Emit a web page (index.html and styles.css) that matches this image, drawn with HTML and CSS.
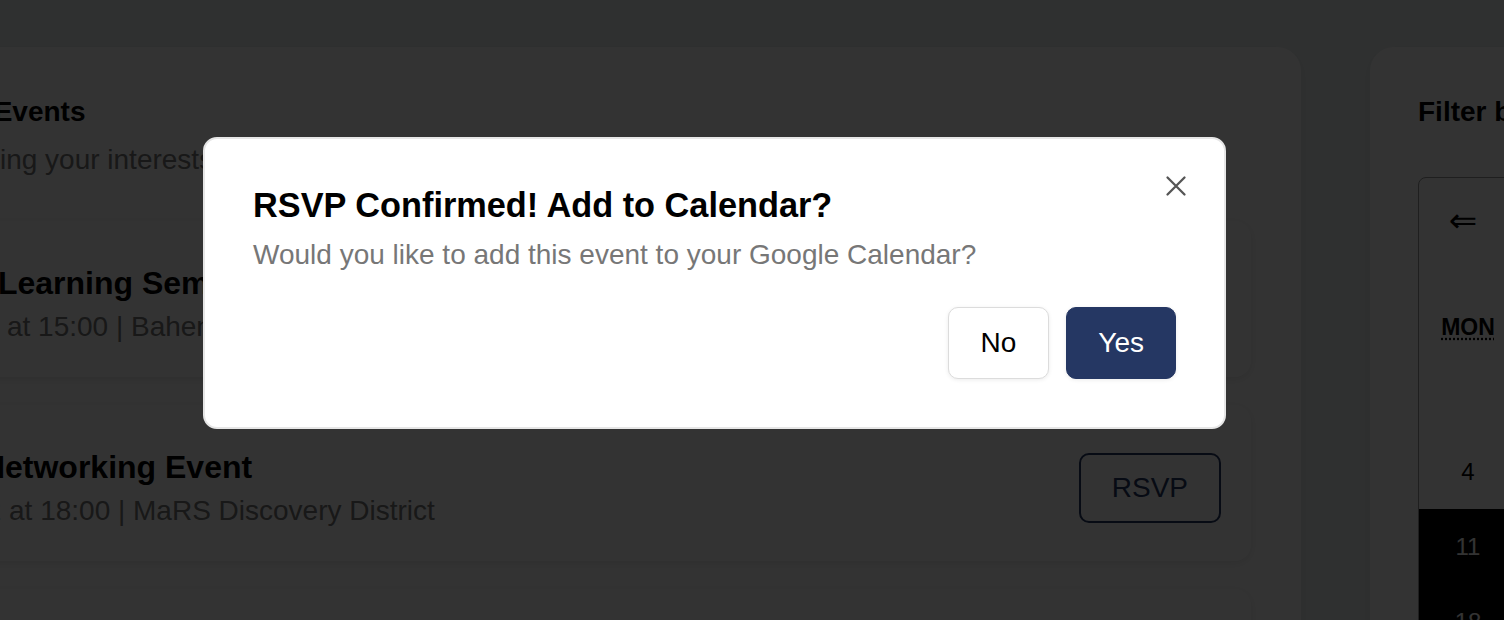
FILE: index.html
```html
<!DOCTYPE html>
<html lang="en">
<head>
<meta charset="utf-8">
<title>Events</title>
<link rel="stylesheet" href="styles.css">
</head>
<body>
<div class="page">
  <main class="events-card">
    <h2 class="section-title">Upcoming Events</h2>
    <p class="section-sub">Picks matching your interests</p>
    <ul class="event-list">
      <li class="event">
        <div class="event-info">
          <h3 class="event-title">Machine Learning Seminar</h3>
          <p class="event-meta">2025-08-11 at 15:00 | Bahen Centre</p>
        </div>
        <button class="btn-rsvp">RSVP</button>
      </li>
      <li class="event">
        <div class="event-info">
          <h3 class="event-title">Startup Networking Event</h3>
          <p class="event-meta">2025-08-12 at 18:00 | MaRS Discovery District</p>
        </div>
        <button class="btn-rsvp">RSVP</button>
      </li>
      <li class="event">
        <div class="event-info">
          <h3 class="event-title">Campus Hackathon Kickoff</h3>
          <p class="event-meta">2025-08-18 at 10:00 | Myhal Centre</p>
        </div>
        <button class="btn-rsvp">RSVP</button>
      </li>
    </ul>
  </main>
  <aside class="filter-card">
    <h2 class="section-title">Filter by Date</h2>
    <div class="calendar">
      <div class="cal-nav">
        <button class="cal-arrow">&#8656;</button>
        <button class="cal-arrow">&#8592;</button>
        <span class="cal-label">August 2025</span>
        <button class="cal-arrow">&#8594;</button>
        <button class="cal-arrow">&#8658;</button>
      </div>
      <div class="cal-weekdays">
        <abbr title="Monday">MON</abbr><abbr title="Tuesday">TUE</abbr><abbr title="Wednesday">WED</abbr><abbr title="Thursday">THU</abbr><abbr title="Friday">FRI</abbr><abbr title="Saturday">SAT</abbr><abbr title="Sunday">SUN</abbr>
      </div>
      <div class="cal-days">
        <span class="tile"></span><span class="tile"></span><span class="tile"></span><span class="tile"></span><span class="tile">1</span><span class="tile">2</span><span class="tile">3</span>
        <span class="tile">4</span><span class="tile">5</span><span class="tile">6</span><span class="tile">7</span><span class="tile">8</span><span class="tile">9</span><span class="tile">10</span>
        <span class="tile active">11</span><span class="tile active">12</span><span class="tile active">13</span><span class="tile active">14</span><span class="tile active">15</span><span class="tile active">16</span><span class="tile active">17</span>
        <span class="tile active">18</span><span class="tile">19</span><span class="tile">20</span><span class="tile">21</span><span class="tile">22</span><span class="tile">23</span><span class="tile">24</span>
      </div>
    </div>
  </aside>
</div>

<div class="overlay">
  <div class="modal" role="dialog" aria-modal="true">
    <button class="modal-close" aria-label="Close">
      <svg width="24" height="24" viewBox="0 0 24 24"><path d="M3.5 3.5 L20.5 20.5 M20.5 3.5 L3.5 20.5" stroke="#555" stroke-width="2.3" stroke-linecap="round" fill="none"/></svg>
    </button>
    <h2 class="modal-title">RSVP Confirmed! Add to Calendar?</h2>
    <p class="modal-text">Would you like to add this event to your Google Calendar?</p>
    <div class="modal-actions">
      <button class="btn btn-no">No</button>
      <button class="btn btn-yes">Yes</button>
    </div>
  </div>
</div>
</body>
</html>
```

FILE: styles.css
```css
html, body {
  margin: 0;
  padding: 0;
}
body {
  width: 1504px;
  height: 620px;
  overflow: hidden;
  background: #ebf0f0;
  font-family: "Liberation Sans", Arial, sans-serif;
  color: #000;
}

.page {
  display: flex;
  align-items: flex-start;
  gap: 69px;
  padding-top: 47px;
  margin-left: -199px;
  width: max-content;
}

.events-card {
  width: 1500px;
  box-sizing: border-box;
  background: #fff;
  border-radius: 24px;
  padding: 48px 50px 48px 48px;
  box-shadow: 0 4px 16px rgba(0, 0, 0, 0.06);
  flex-shrink: 0;
}

.section-title {
  margin: 0;
  font-size: 28px;
  line-height: 1.2;
  font-weight: 700;
  color: #000;
  white-space: nowrap;
}
.section-sub {
  margin: 14px 0 0;
  font-size: 28px;
  line-height: 1.2;
  color: #777;
  white-space: nowrap;
}

.event-list {
  list-style: none;
  margin: 45px 0 0;
  padding: 0;
  display: flex;
  flex-direction: column;
  gap: 28px;
}
.event {
  display: flex;
  align-items: center;
  justify-content: space-between;
  background: #fff;
  border-radius: 16px;
  box-shadow: 0 2px 10px rgba(0, 0, 0, 0.1);
  padding: 43px 30px 34px 12px;
}
.event-title {
  margin: 0;
  font-size: 32px;
  line-height: 1.2;
  font-weight: 700;
  white-space: nowrap;
}
.event-meta {
  margin: 7px 0 0;
  text-indent: -3px;
  font-size: 28px;
  line-height: 1.2;
  color: #777;
  white-space: nowrap;
}
.btn-rsvp {
  font-family: inherit;
  font-size: 28px;
  line-height: 1.15;
  color: #253763;
  background: #fff;
  border: 2px solid #253763;
  border-radius: 10px;
  padding: 17px 31px;
}

.filter-card {
  width: 784px;
  box-sizing: border-box;
  background: #fff;
  border-radius: 24px;
  padding: 48px;
  box-shadow: 0 4px 16px rgba(0, 0, 0, 0.06);
  flex-shrink: 0;
}
.calendar {
  margin-top: 48px;
  width: 686px;
  border: 1px solid #999;
  border-radius: 8px;
  overflow: hidden;
}
.cal-nav {
  display: flex;
  height: 84px;
}
.cal-arrow {
  width: 88px;
  border: 0;
  background: none;
  padding: 0;
  font-family: "DejaVu Sans", sans-serif;
  font-size: 34px;
  color: #000;
}
.cal-label {
  flex: 1;
  display: flex;
  align-items: center;
  justify-content: center;
  font-size: 24px;
}
.cal-weekdays {
  margin-top: 36px;
  height: 60px;
  display: grid;
  grid-template-columns: repeat(7, 98px);
  align-items: center;
  text-align: center;
}
.cal-weekdays abbr {
  font-size: 23px;
  font-weight: 700;
  text-decoration: underline dotted;
  text-underline-offset: 3px;
}
.cal-days {
  margin-top: 1.5px;
  display: grid;
  grid-template-columns: repeat(7, 98px);
  grid-auto-rows: 75px;
}
.tile {
  display: flex;
  align-items: center;
  justify-content: center;
  font-size: 24px;
  color: #000;
}
.tile.active {
  background: #000;
  color: #fff;
}

.overlay {
  position: fixed;
  inset: 0;
  background: rgba(0, 0, 0, 0.8);
}
.modal {
  position: relative;
  box-sizing: border-box;
  width: 1023px;
  margin: 137px 0 0 203px;
  background: #fff;
  border: 2px solid #e6e6e6;
  border-radius: 14px;
  padding: 48px;
}
.modal-close {
  position: absolute;
  top: 35px;
  right: 36px;
  width: 24px;
  height: 24px;
  padding: 0;
  border: 0;
  background: none;
  display: block;
}
.modal-close svg {
  display: block;
}
.modal-title {
  margin: 0;
  font-size: 34.3px;
  line-height: 1.1;
  font-weight: 700;
  color: #000;
}
.modal-text {
  margin: 13.6px 0 0;
  font-size: 28px;
  line-height: 1.2;
  color: #777;
}
.modal-actions {
  display: flex;
  justify-content: flex-end;
  gap: 17px;
  margin-top: 35px;
}
.btn {
  font-family: inherit;
  font-size: 28px;
  line-height: 1.15;
  border-radius: 10px;
  border: 1px solid;
}
.btn-no {
  background: #fff;
  color: #000;
  border-color: #dcdcdc;
  padding: 19px 32px;
  box-shadow: 0 1px 4px rgba(0, 0, 0, 0.08);
}
.btn-yes {
  background: #253763;
  color: #fff;
  border-color: #253763;
  padding: 19px 31px;
  box-shadow: 0 1px 4px rgba(0, 0, 0, 0.08);
}
```
